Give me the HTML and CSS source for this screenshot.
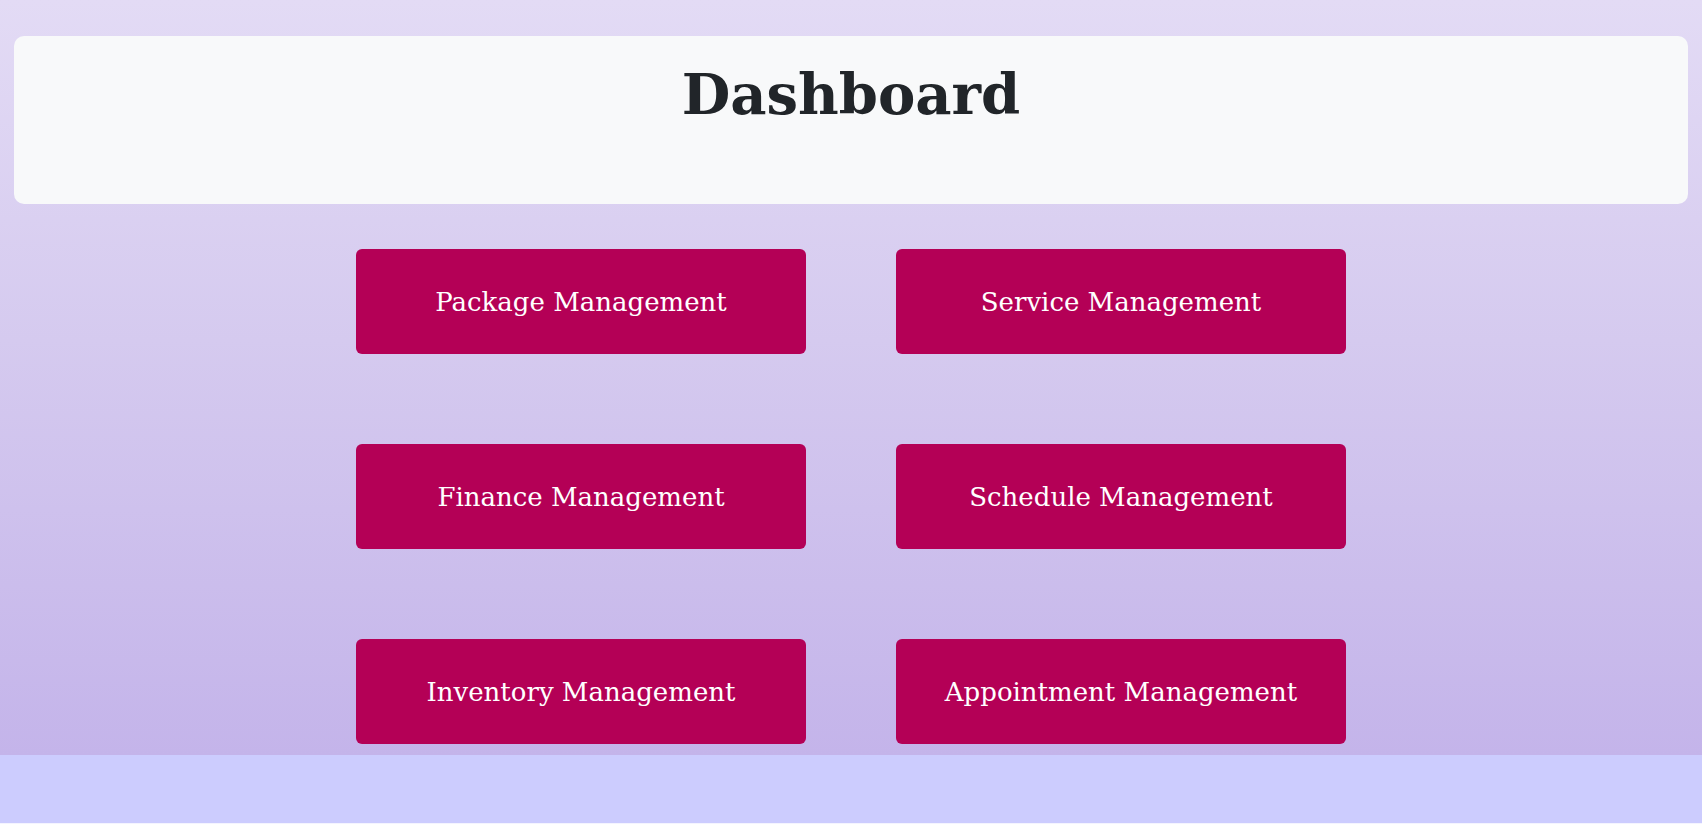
FILE: index.html
```html
<!DOCTYPE html>
<html lang="en">
<head>
<meta charset="utf-8">
<title>Dashboard</title>
<link rel="stylesheet" href="styles.css">
</head>
<body>
<div class="page">
  <header class="title-card">
    <h1 class="title">Dashboard</h1>
  </header>
  <main class="menu">
    <a class="menu-btn" href="#">Package Management</a>
    <a class="menu-btn" href="#">Service Management</a>
    <a class="menu-btn" href="#">Finance Management</a>
    <a class="menu-btn" href="#">Schedule Management</a>
    <a class="menu-btn" href="#">Inventory Management</a>
    <a class="menu-btn" href="#">Appointment Management</a>
  </main>
</div>
</body>
</html>
```
FILE: styles.css
```css
html {
  background: #ccccfe;
}
body {
  margin: 0;
  height: 100vh;
  box-sizing: border-box;
  overflow: hidden;
  background: #ccccfe;
  border-bottom: 1px solid #f4f4ff;
  font-family: "DejaVu Serif", Georgia, serif;
}
.page {
  background: linear-gradient(to bottom, #e3dbf5 0%, #d5caef 45%, #c4b4ea 100%);
  padding: 36px 14px 11px;
}
.title-card {
  background: #f8f9fa;
  border-radius: 10px;
  height: 168px;
  box-sizing: border-box;
  padding-top: 25px;
  text-align: center;
}
.title {
  margin: 0;
  font-size: 56px;
  line-height: 1.2;
  font-weight: bold;
  color: #212529;
}
.menu {
  margin-top: 45px;
  display: grid;
  grid-template-columns: 450px 450px;
  grid-auto-rows: 105px;
  gap: 90px;
  justify-content: center;
}
.menu-btn {
  display: flex;
  align-items: center;
  justify-content: center;
  background: #b40056;
  color: #ffffff;
  border-radius: 6px;
  text-decoration: none;
  font-size: 26px;
}
```
